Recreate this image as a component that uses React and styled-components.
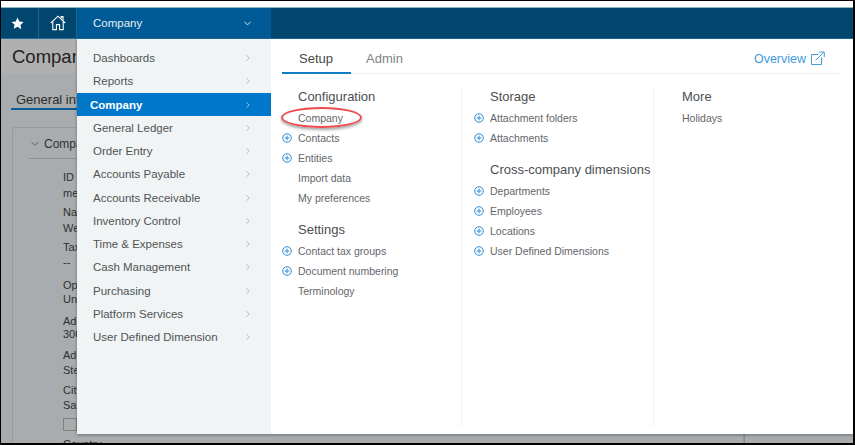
import React from "react";
import styled, { createGlobalStyle } from "styled-components";
import { ChevronDown, ChevronRight } from "lucide-react";

const Global = createGlobalStyle`
  html, body { margin: 0; padding: 0; background: #fff; }
  * { box-sizing: border-box; }
  #root { width: 855px; height: 445px; overflow: hidden; }
`;

const Frame = styled.div`
  position: relative;
  width: 855px;
  height: 445px;
  display: flex;
  flex-direction: column;
  overflow: hidden;
  background: #fff;
  border-style: solid;
  border-color: #000;
  border-width: 1px 2px 2px 1px;
  font-family: "Liberation Sans", Arial, sans-serif;
`;
const TopGap = styled.div` height: 6px; flex: none; background: #fff; `;
const NavBar = styled.nav`
  display: flex;
  flex: none;
  height: 32px;
  background: #00466f;
  border-top: 1px solid #8fb3c9;
  border-bottom: 1px solid #1f6c9e;
`;
const NavIcon = styled.div`
  width: ${p => p.$w}px;
  padding-right: ${p => p.$pr || 0}px;
  display: flex;
  align-items: center;
  justify-content: center;
  border-right: 1px solid #1d6590;
  color: #fff;
`;
const NavModule = styled.div`
  width: 194px;
  display: flex;
  align-items: center;
  justify-content: space-between;
  padding: 0 18px 0 16px;
  background: #005a96;
  color: #e4eef5;
  font-size: 11.5px;
`;
const Page = styled.div`
  flex: 1;
  min-height: 0;
  display: flex;
  background: #a8acae;
  overflow: hidden;
`;
const PageMain = styled.div`
  width: 743px;
  flex: none;
  display: flex;
  flex-direction: column;
`;
const PageSide = styled.div`
  flex: 1;
  border-left: 1px solid #8d8f8f;
`;
const TitleBand = styled.div`
  height: 34px;
  flex: none;
  padding: 6px 0 0 11px;
  background: #b0b0b0;
  color: #222;
  font-size: 18.5px;
  line-height: 24px;
`;
const TitleClip = styled.div`
  width: 64px;
  overflow: hidden;
  white-space: nowrap;
`;
const SubTab = styled.div`
  flex: none;
  margin: 18px 0 0 10px;
  width: 66px;
  height: 19px;
  padding-left: 5px;
  color: #2b2d2e;
  font-size: 13px;
  line-height: 17px;
  white-space: nowrap;
  overflow: hidden;
  border-bottom: 2px solid #0c5c96;
`;
const Card = styled.div`
  margin: 17px 0 0 11px;
  flex: none;
  padding: 8px 0 0 16px;
  background: #a8acae;
  border: 1px solid #989c9e;
  border-bottom: none;
  border-radius: 3px 0 0 0;
`;
const CardTitle = styled.div`
  display: flex;
  align-items: center;
  gap: 3px;
  height: 16px;
  color: #2f3131;
  font-size: 12px;
  white-space: nowrap;
`;
const CardRule = styled.div`
  height: 1px;
  margin-top: 6px;
  background: #8f9191;
`;
const Fields = styled.div`
  margin: 11px 0 0 34px;
  width: 13px;
`;
const FieldText = styled.div`
  height: ${p => p.$h}px;
  color: #2f3030;
  font-size: 11px;
  line-height: 14px;
  white-space: nowrap;
`;
const FieldBox = styled.div`
  width: 14px;
  height: 13px;
  margin: 0 0 6px;
  background: #a9acad;
  border: 1px solid #808282;
`;

const MenuLayer = styled.div`
  position: absolute;
  left: 76px;
  top: 38px;
  width: 776px;
  height: 395px;
  display: flex;
  box-shadow: 0 1px 3px rgba(0,0,0,.35);
`;
const Sidebar = styled.ul`
  width: 194px;
  flex: none;
  margin: 0;
  padding: 7.5px 0 0;
  list-style: none;
  background: #f0f4f5;
`;
const SideItem = styled.li`
  height: 23.25px;
  display: flex;
  align-items: center;
  justify-content: space-between;
  padding: 0 18px 0 ${p => (p.$active ? 13 : 16)}px;
  background: ${p => (p.$active ? "#0077c8" : "transparent")};
  color: ${p => (p.$active ? "#fff" : "#505355")};
  font-size: 11.5px;
  font-weight: ${p => (p.$active ? 700 : 400)};
  & svg { color: ${p => (p.$active ? "#e6f1f9" : "#8f9599")}; }
`;
const Panel = styled.div`
  flex: 1;
  background: #fff;
  padding: 0 13px 0 11px;
  display: flex;
  flex-direction: column;
`;
const TabBar = styled.div`
  display: flex;
  align-items: stretch;
  height: 35px;
  flex: none;
  border-bottom: 1px solid #f1f1f1;
`;
const Tab = styled.div`
  width: ${p => p.$w}px;
  height: 35px;
  padding-top: 12px;
  padding-right: ${p => (p.$active ? 1 : 3)}px;
  text-align: center;
  font-size: 13px;
  line-height: 16px;
  color: ${p => (p.$active ? "#45484a" : "#7f8385")};
  border-bottom: ${p => (p.$active ? "2px solid #0e7cc6" : "none")};
`;
const Overview = styled.div`
  margin-left: auto;
  margin-right: 15px;
  display: flex;
  align-items: flex-start;
  gap: 4px;
  padding-top: 12px;
  color: #3f9bdb;
  font-size: 12.5px;
  line-height: 16px;
`;
const OutIcon = styled.svg`
  width: 15px;
  height: 15px;
  flex: none;
`;
const Columns = styled.div`
  flex: 1;
  display: flex;
  padding-top: 13px;
`;
const Column = styled.div`
  width: ${p => p.$w}px;
  height: 340px;
  flex: none;
  padding-left: ${p => p.$pl}px;
  border-right: ${p => (p.$last ? "none" : "1px solid #f1f2f2")};
`;
const Heading = styled.div`
  height: 20px;
  margin-top: ${p => (p.$first ? 0 : 11.5)}px;
  margin-bottom: 1px;
  color: #4c4f51;
  font-size: 13px;
  line-height: 20px;
  white-space: nowrap;
`;
const Link = styled.div`
  position: relative;
  height: 20px;
  display: flex;
  align-items: center;
  color: #63666a;
  font-size: 10.5px;
  white-space: nowrap;
`;
const Plus = styled.svg`
  position: absolute;
  left: -16px;
  top: 5px;
  width: 10px;
  height: 10px;
`;
const Annotation = styled.span`
  position: absolute;
  left: -17px;
  top: -1px;
  width: 81px;
  height: 21px;
  border: 2px solid #ee4c4c;
  border-radius: 50%;
  box-shadow: 0 2px 3px rgba(0,0,0,.35);
`;

const PlusIcon = () => (
  <Plus viewBox="0 0 10 10" aria-hidden="true">
    <circle cx="5" cy="5" r="4.3" fill="#fff" stroke="#2f8fd6" strokeWidth="1" />
    <path d="M5 2.6v4.8M2.6 5h4.8" stroke="#2f8fd6" strokeWidth="1" fill="none" />
  </Plus>
);

const StarIcon = () => (
  <svg width="13" height="13" viewBox="0 0 24 24" aria-hidden="true">
    <path d="M12 1l3.4 7.3 7.9 1-5.8 5.4 1.5 7.9L12 17.8l-6.9 3.8 1.5-7.9L.8 9.3l7.9-1z" fill="#fff" />
  </svg>
);

const HomeIcon = () => (
  <svg width="16" height="16" viewBox="0 0 16 16" fill="none" stroke="#fff" strokeWidth="1.1" aria-hidden="true">
    <path d="M.8 8 8 1.2 15.2 8" />
    <path d="M11.2 3.6V1.6h1.8v3.8" />
    <path d="M2.8 6.6v8h3.6V9.6h3.2v5h3.6v-8" />
  </svg>
);

const menu = ["Dashboards", "Reports", "Company", "General Ledger", "Order Entry", "Accounts Payable", "Accounts Receivable", "Inventory Control", "Time & Expenses", "Cash Management", "Purchasing", "Platform Services", "User Defined Dimension"];

const columns = [
  { w: 180, pl: 16, groups: [
    { title: "Configuration", items: [["Company", 0, 1], ["Contacts", 1], ["Entities", 1], ["Import data", 0], ["My preferences", 0]] },
    { title: "Settings", items: [["Contact tax groups", 1], ["Document numbering", 1], ["Terminology", 0]] },
  ]},
  { w: 192, pl: 28, groups: [
    { title: "Storage", items: [["Attachment folders", 1], ["Attachments", 1]] },
    { title: "Cross-company dimensions", items: [["Departments", 1], ["Employees", 1], ["Locations", 1], ["User Defined Dimensions", 1]] },
  ]},
  { w: 150, pl: 28, last: true, groups: [
    { title: "More", items: [["Holidays", 0]] },
  ]},
];

const fields = [["ID", 16], ["me", 19], ["Nar", 16], ["We", 19], ["Tax", 15], ["--", 23], ["Op", 14], ["Uni", 22], ["Add", 13], ["300", 21], ["Add", 15], ["Ste", 20], ["City", 15], ["Sar", 20]];

export default function App() {
  return (
    <Frame>
      <Global />
      <TopGap />
      <NavBar>
        <NavIcon $w={38} $pr={4}><StarIcon /></NavIcon>
        <NavIcon $w={38}><HomeIcon /></NavIcon>
        <NavModule>Company<ChevronDown size={11} strokeWidth={2} /></NavModule>
      </NavBar>
      <Page>
        <PageMain>
          <TitleBand><TitleClip>Company</TitleClip></TitleBand>
          <SubTab>General information</SubTab>
          <Card>
            <CardTitle><ChevronDown size={12} strokeWidth={1.2} />Compa</CardTitle>
            <CardRule />
            <Fields>
              {fields.map(([t, h], i) => <FieldText key={i} $h={h}>{t}</FieldText>)}
              <FieldBox />
              <FieldText $h={14}>Country</FieldText>
            </Fields>
          </Card>
        </PageMain>
        <PageSide />
      </Page>
      <MenuLayer>
        <Sidebar>
          {menu.map(m => (
            <SideItem key={m} $active={m === "Company"}>
              {m}<ChevronRight size={10} strokeWidth={1.5} />
            </SideItem>
          ))}
        </Sidebar>
        <Panel>
          <TabBar>
            <Tab $w={69} $active>Setup</Tab>
            <Tab $w={70}>Admin</Tab>
            <Overview>
              Overview
              <OutIcon viewBox="0 0 15 15" fill="none" stroke="#3f9bdb" strokeWidth="1" aria-hidden="true">
                <path d="M8.5 3.5H1.5v10h10V6.5" />
                <path d="M5.5 9.5 13.8 1.2M9.3 1h5v5" />
              </OutIcon>
            </Overview>
          </TabBar>
          <Columns>
            {columns.map(c => (
              <Column key={c.groups[0].title} $w={c.w} $pl={c.pl} $last={c.last}>
                {c.groups.map((g, i) => (
                  <div key={g.title}>
                    <Heading $first={i === 0}>{g.title}</Heading>
                    {g.items.map(([t, plus, circled]) => (
                      <Link key={t}>
                        {plus ? <PlusIcon /> : null}
                        {t}
                        {circled ? <Annotation /> : null}
                      </Link>
                    ))}
                  </div>
                ))}
              </Column>
            ))}
          </Columns>
        </Panel>
      </MenuLayer>
    </Frame>
  );
}
